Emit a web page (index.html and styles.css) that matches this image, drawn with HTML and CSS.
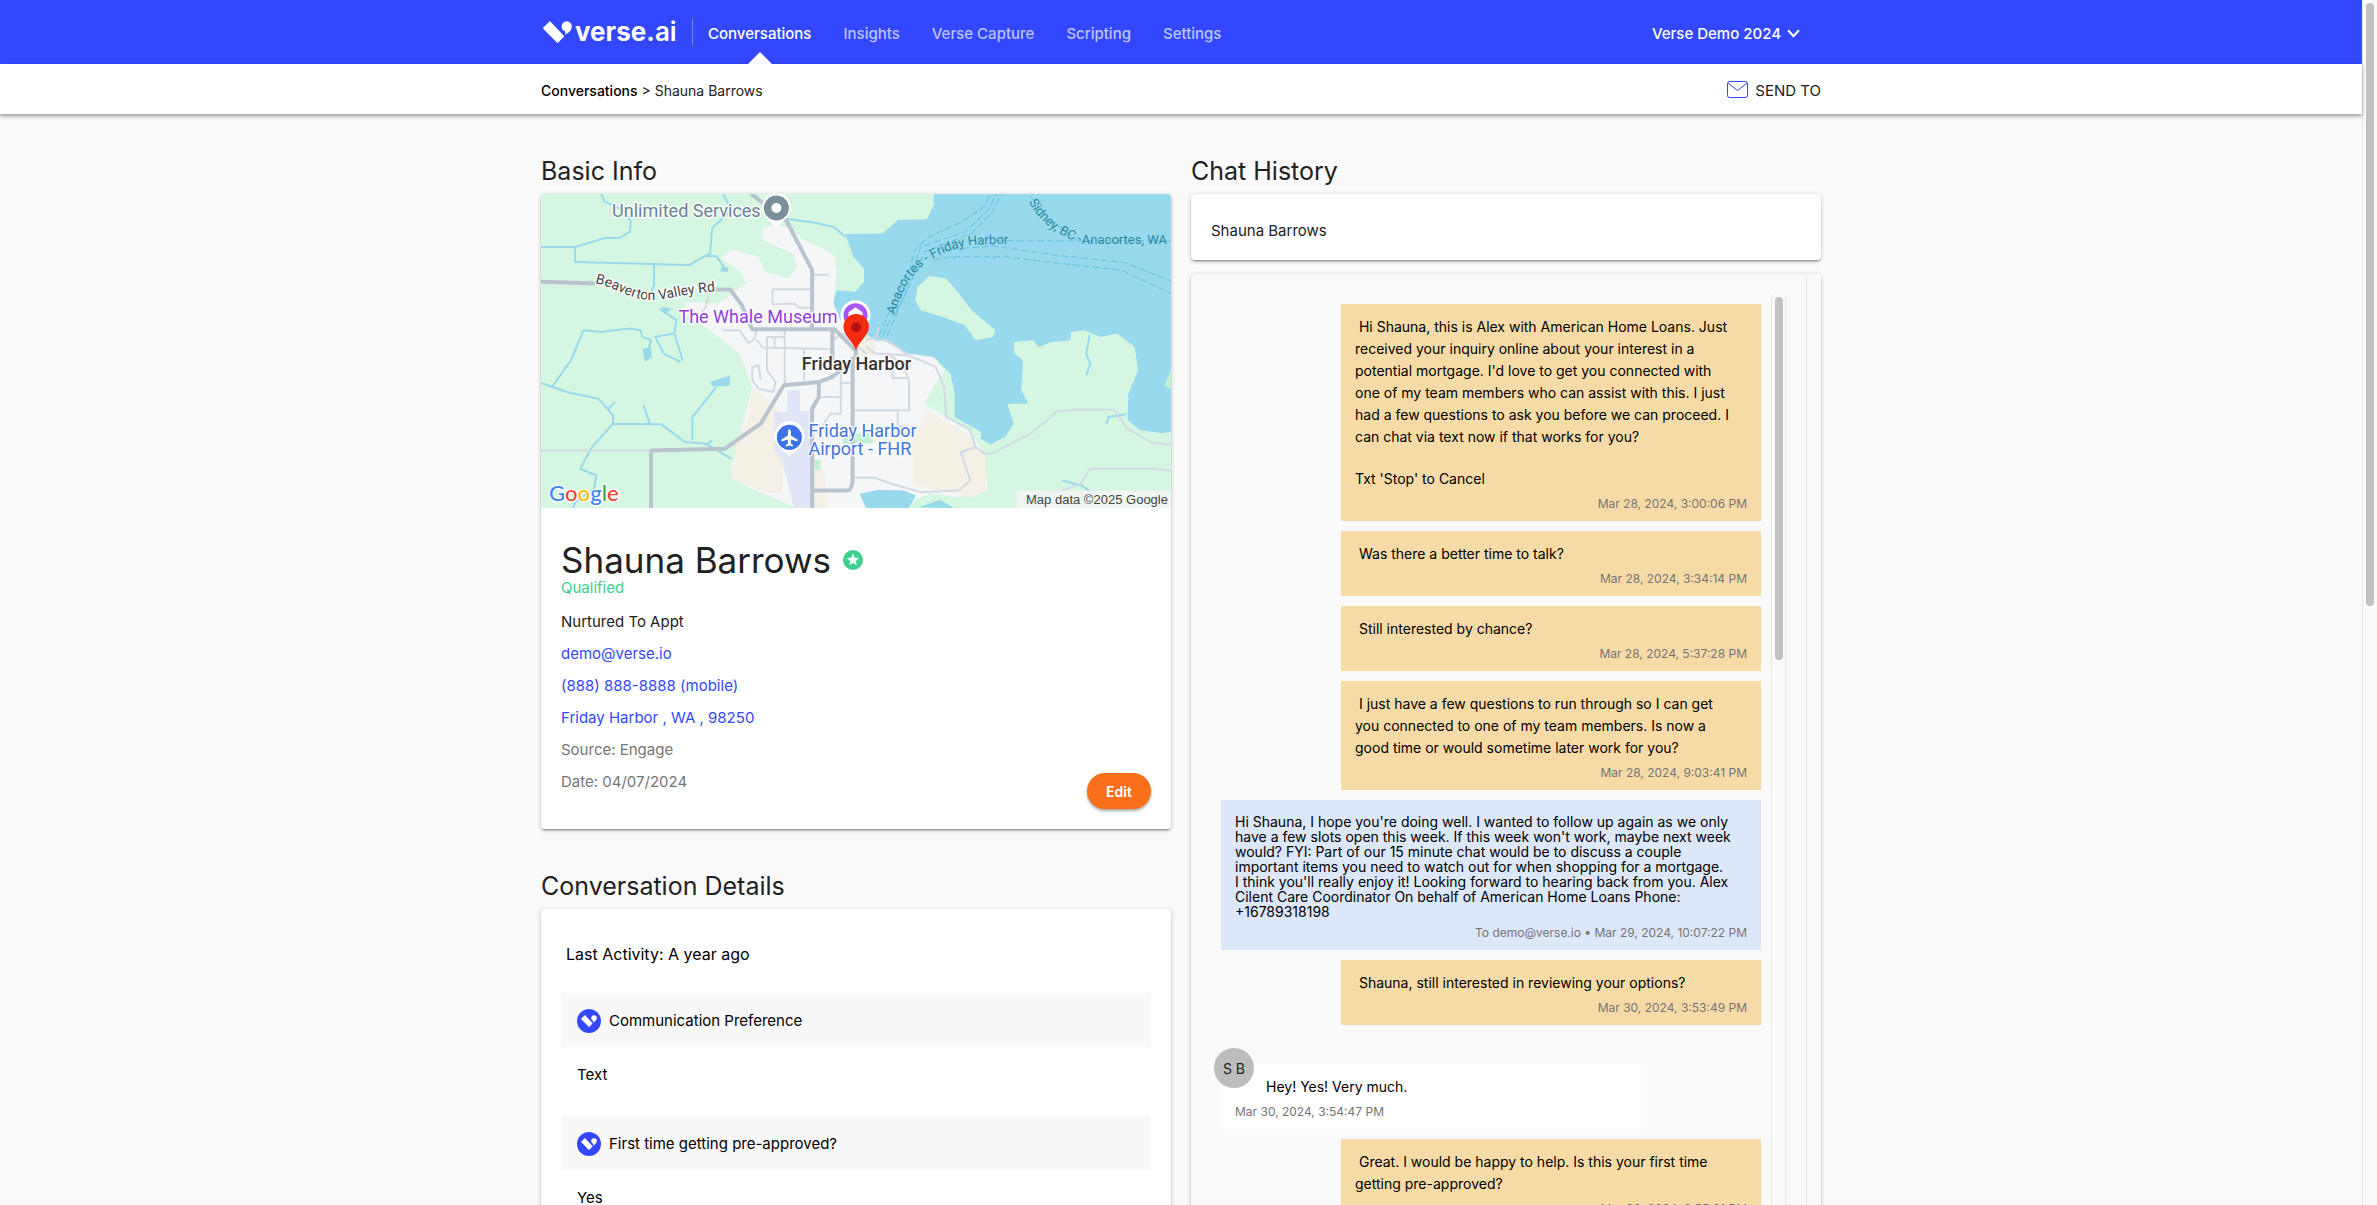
FILE: index.html
```html
<!DOCTYPE html>
<html lang="en">
<head>
<meta charset="utf-8">
<title>Verse.ai - Shauna Barrows</title>
<meta name="viewport" content="width=device-width, initial-scale=1">
<link rel="stylesheet" href="styles.css">
</head>
<body>
<svg class="defs" aria-hidden="true">
  <symbol id="verse-mark" viewBox="0 0 29 22">
    <path d="M.4 6.600 6.200.7a1 1 0 0 1 1.400 0L21.300 15.300 15.300 21.400a1 1 0 0 1-1.400 0L.4 8a1 1 0 0 1 0-1.400z"/>
    <path d="M23.700.3a5.100 5.100 0 0 1 5.100 5.200c0 3.800-3.300 6.500-7 8.300.5-1.500.7-2.500.5-3.400-2.300-.6-3.700-2.600-3.700-4.900A5.100 5.100 0 0 1 23.700.3z"/>
  </symbol>
</svg>
<div class="page">
  <div class="view">
    <header class="topbar">
      <div class="container topbar-row">
        <a class="logo" href="#"><svg class="logo-mark"><use href="#verse-mark"/></svg><span class="logo-word">verse.<span class="logo-tld">ai</span></span></a>
        <nav class="nav">
          <a class="nav-link active" href="#">Conversations</a>
          <a class="nav-link" href="#">Insights</a>
          <a class="nav-link" href="#">Verse Capture</a>
          <a class="nav-link" href="#">Scripting</a>
          <a class="nav-link" href="#">Settings</a>
        </nav>
        <button class="account" type="button">Verse Demo 2024
          <svg class="chevron" viewBox="0 0 12 8"><path d="M1 1l5 5.500L11 1"/></svg>
        </button>
      </div>
    </header>
    <div class="subbar">
      <div class="container subbar-row">
        <div class="crumbs"><a href="#">Conversations</a> &gt; Shauna Barrows</div>
        <button class="send" type="button">
          <svg class="mail" viewBox="0 0 22 18"><rect x=".5" y=".5" width="20" height="16" rx="2"/><path d="M1 2l9.500 7.500L20 2"/></svg>SEND TO
        </button>
      </div>
    </div>

    <main class="container columns">
      <div class="column">
        <section>
          <h2 class="heading">Basic Info</h2>
          <div class="card">
            <svg class="map" viewBox="0 0 629 314" preserveAspectRatio="xMidYMid slice" role="img" aria-label="Map of Friday Harbor">
              <defs>
                <path id="road-label" d="M54 89 C72 92 88 106 112 106 C132 105 140 99 180 97"/>
                <path id="ferry-label" d="M353 121 C362 92 372 74 396 62 S430 50 475 50"/>
                <path id="sidney-label" d="M487 8 C498 28 514 42 550 53"/>
              </defs>
              <g class="land" transform="scale(.421 .33333) translate(-29 -162)">
                <rect class="park" x="20" y="155" width="1510" height="960"/>
                <path class="town" d="M555 262 595 255 625 270 650 300 700 325 724 345 730 400 722 480 800 600 860 600 960 650 985 690 960 740 938 790 1000 840 1050 880 1080 940 1087 1050 1020 1070 950 1060 870 1104H640L520 1040 480 990 500 880 530 740 500 640 440 580 370 520 370 485 450 490 515 430 500 390 455 355 480 330 545 350 560 395 615 415 637 380 625 340 555 300z"/>
                <path class="sand" d="M530 745 580 790 610 830 600 1060 560 1055 482 1015 492 905 520 840zM945 810 990 845 1040 880 1060 920 1082 945 1085 1050 1050 1070 990 1055 910 1035V900zM672 940 700 990 710 1104H640zM775 610 815 590 825 640 780 650z"/>
                <path class="runway" d="M614 750H643V812H665L672 1104H630L600 960 582 930V815H612z"/>
                <path class="green" d="M745 880h70v30h-70zM675 958h17v30h-17z"/>
                <path class="water" d="M960 162H1523V875L1500 878 1450 870 1420 840 1422 760 1445 690 1437 620 1395 580 1355 590 1318 570 1285 575V600L1240 605 1210 620 1195 600 1150 605 1152 640 1172 660 1168 750 1185 790 1135 790 1150 850 1130 890 1095 912 1072 895V875L1010 830V760L1000 700 960 650 900 640 840 600 820 600 800 580 740 540 722 490 730 450 775 455 795 425V385L770 350 750 282 840 280 875 240 945 238 960 195z"/>
                <path class="park" d="M950 408 990 415 1020 460 1050 510 1107 570 1100 590 1060 600 1035 555 980 530 930 510 917 480 922 440z"/>
                <path class="water" d="M785 1060 830 1048 890 1050 918 1065 900 1104H800zM925 1100 975 1078 1010 1104zM430 725 478 705 476 738 435 738zM270 625 290 622 292 650 275 665zM455 382h18v12h-18zM315 500 340 505 322 522z"/>
                <path class="green" d="M1523 690 1507 735 1523 748z"/>
                <g class="stream">
                  <path d="M29 321H110L180 294 215 294 240 275 242 245 225 210 180 185 172 162M110 321V366L380 375 430 340 435 265 468 225 480 205 460 162M415 348H445L465 385M297 375V435L290 455"/>
                  <path d="M29 728 90 755 165 775 200 825V850L315 852 370 905 420 910 480 955M200 850 150 920 122 985 160 1005 155 1045 110 1085 105 1104M185 810 205 785M287 850 272 795M388 900V830L445 740M310 505 350 540 345 580 300 590 320 640 360 665M345 580 365 660M55 740 100 660 130 570 170 575 240 565 265 570 270 590 290 600 282 640M420 915 435 900M600 235 680 248 725 262 750 290M1370 850 1375 830 1415 822M1265 1020 1310 1035 1340 1060M1330 585 1322 640 1332 670 1322 705"/>
                </g>
                <g class="street">
                  <path d="M578 447H670M578 447V492L630 490 640 503H672M672 404H712M460 570H500L520 608 535 598 540 570M540 598 555 622 720 627M607 570V730M565 590H605M565 590V690L585 725 580 755 545 745 530 720V680L545 675 550 720M583 590V622M653 627V720M690 770H740M740 700V820H715L690 870M768 728 740 728M770 810H902V720L885 670 850 640M875 810V860L900 855M863 690V713H900M720 600 745 580 800 640M800 600 825 590 830 560M800 620 822 640 900 645 965 680 985 740 990 830 1045 865 1060 920 1025 935 1047 1020 1020 1050 930 1055 860 1030 820 1012H770M1060 920 1080 940 1100 938 1190 880 1255 812 1300 808H1388L1420 865 1480 908 1523 912M1523 990 1480 985H1330L1310 1030 1265 1050 1210 1060 1180 1080M29 930H290M425 470 420 500 410 515M820 600 850 600 900 645"/>
                </g>
                <g class="road">
                  <path d="M527 162 610 240 672 390V570M29 425 160 430M440 448H478L505 495 530 567H725L776 632 775 650 720 710 690 725 605 735 550 850 465 925 290 930V1104M672 1104V805L688 770V730M768 650V1010Q768 1050 755 1050H672M720 570V660"/>
                </g>
                <g class="ferry">
                  <path d="M830 585 905 380 915 330 950 290 1020 250 1080 200 1095 162M850 585 920 385 940 335 1050 280 1100 215 1120 162M840 585 912 382 930 320 1035 275 1090 210 1108 162M1110 302H1523M980 330 1100 318 1250 345 1415 368 1523 422M960 360 1000 350 1130 350 1260 370 1405 390 1523 460M1190 170 1240 240 1300 300M870 520 905 430"/>
                </g>
              </g>
              <g class="label place"><text x="71" y="23">Unlimited Services</text></g>
              <g class="label road-name"><text><textPath href="#road-label">Beaverton Valley Rd</textPath></text></g>
              <g class="label museum"><text x="296" y="129" text-anchor="end">The Whale Museum</text></g>
              <g class="label airport"><text x="267" y="243">Friday Harbor</text><text x="267" y="261">Airport - FHR</text></g>
              <g class="ferry-name">
                <text><textPath href="#ferry-label">Anacortes - Friday Harbor</textPath></text>
                <text><textPath href="#sidney-label">Sidney, BC -</textPath></text>
                <text x="625" y="50" text-anchor="end">Anacortes, WA</text>
              </g>
              <g>
                <path fill="#fff" d="M235 34 225 24a14.500 14.500 0 1 1 20 0z"/><circle cx="235" cy="14" r="12.500" fill="#78909c"/><circle cx="235" cy="14" r="5" fill="#fff"/>
                <circle cx="314" cy="121" r="15" fill="#fff"/><circle cx="314" cy="121" r="12" fill="#a855f7"/><path fill="#fff" d="M307 118l7-5 7 5v7h-14z"/>
                <path fill="#fff" d="M248 262 237 252a15 15 0 1 1 22 0z"/><circle cx="248" cy="243" r="12.500" fill="#3b72e8"/>
                <path fill="#fff" d="M248 235q1.500 0 1.500 3v3l6.500 4v2l-6.500-2v4l2 1.500v1.500l-3.500-1-3.500 1v-1.500l2-1.500v-4l-6.500 2v-2l6.500-4v-3q0-3 1.500-3z"/>
                <path fill="#f72b10" d="M314.500 157C313 148 302 142 302 132.500a12.700 12.700 0 0 1 25.400 0C327.400 142 316 148 314.500 157z"/><circle cx="314.700" cy="133" r="5" fill="#b31412"/>
              </g>
              <g class="label city"><text x="315" y="176" text-anchor="middle">Friday Harbor</text></g>
              <g class="label google"><text x="8" y="307"><tspan fill="#4285f4">G</tspan><tspan fill="#ea4335">o</tspan><tspan fill="#fbbc05">o</tspan><tspan fill="#4285f4">g</tspan><tspan fill="#34a853">l</tspan><tspan fill="#ea4335">e</tspan></text></g>
              <rect x="475" y="296" width="154" height="18" fill="#f5f5f5" fill-opacity=".8"/>
              <text class="credit" x="626" y="310" text-anchor="end">Map data ©2025 Google</text>
            </svg>
            <div class="info">
              <div class="details">
                <h1 class="name">Shauna Barrows
                  <svg class="star" viewBox="0 0 20 20"><circle cx="10" cy="10" r="10"/><path d="M10 3.500l1.700 4.200 4.500.3-3.500 2.900 1.100 4.400L10 12.900l-3.800 2.400 1.100-4.400L3.800 8l4.500-.3z"/></svg>
                </h1>
                <p class="status">Qualified</p>
                <ul class="facts">
                  <li>Nurtured To Appt</li>
                  <li><a href="#">demo@verse.io</a></li>
                  <li><a href="#">(888) 888-8888 (mobile)</a></li>
                  <li><a href="#">Friday Harbor , WA , 98250</a></li>
                  <li class="muted">Source: Engage</li>
                  <li class="muted">Date: 04/07/2024</li>
                </ul>
              </div>
              <button class="edit" type="button">Edit</button>
            </div>
          </div>
        </section>

        <section>
          <h2 class="heading">Conversation Details</h2>
          <div class="card activity">
            <p class="last">Last Activity: A year ago</p>
            <h3 class="question"><svg class="badge" viewBox="0 0 24 24"><circle cx="12" cy="12" r="12"/><use href="#verse-mark" x="4" y="6" width="16" height="12"/></svg>Communication Preference</h3>
            <p class="answer">Text</p>
            <h3 class="question"><svg class="badge" viewBox="0 0 24 24"><circle cx="12" cy="12" r="12"/><use href="#verse-mark" x="4" y="6" width="16" height="12"/></svg>First time getting pre-approved?</h3>
            <p class="answer">Yes</p>
          </div>
        </section>
      </div>

      <section class="column chat">
        <h2 class="heading">Chat History</h2>
        <div class="card contact">Shauna Barrows</div>
        <div class="card panel">
          <div class="panel-body">
            <div class="messages">
              <article class="msg sms">
                <p>&nbsp;Hi Shauna, this is Alex with American Home Loans. Just<br>received your inquiry online about your interest in a<br>potential mortgage. I'd love to get you connected with<br>one of my team members who can assist with this. I just<br>had a few questions to ask you before we can proceed. I<br>can chat via text now if that works for you?</p>
                <p>Txt 'Stop' to Cancel</p>
                <time>Mar 28, 2024, 3:00:06 PM</time>
              </article>
              <article class="msg sms"><p>&nbsp;Was there a better time to talk?</p><time>Mar 28, 2024, 3:34:14 PM</time></article>
              <article class="msg sms"><p>&nbsp;Still interested by chance?</p><time>Mar 28, 2024, 5:37:28 PM</time></article>
              <article class="msg sms">
                <p>&nbsp;I just have a few questions to run through so I can get<br>you connected to one of my team members. Is now a<br>good time or would sometime later work for you?</p>
                <time>Mar 28, 2024, 9:03:41 PM</time>
              </article>
              <article class="msg email">
                <p>Hi Shauna, I hope you're doing well. I wanted to follow up again as we only<br>have a few slots open this week. If this week won't work, maybe next week<br>would? FYI: Part of our 15 minute chat would be to discuss a couple<br>important items you need to watch out for when shopping for a mortgage.<br>I think you'll really enjoy it! Looking forward to hearing back from you. Alex<br>Cilent Care Coordinator On behalf of American Home Loans Phone:<br>+16789318198</p>
                <time>To demo@verse.io • Mar 29, 2024, 10:07:22 PM</time>
              </article>
              <article class="msg sms"><p>&nbsp;Shauna, still interested in reviewing your options?</p><time>Mar 30, 2024, 3:53:49 PM</time></article>
              <article class="msg reply"><span class="avatar">S B</span><p>Hey! Yes! Very much.</p><time>Mar 30, 2024, 3:54:47 PM</time></article>
              <article class="msg sms">
                <p>&nbsp;Great. I would be happy to help. Is this your first time<br>getting pre-approved?</p>
                <time>Mar 30, 2024, 3:55:01 PM</time>
              </article>
            </div>
            <div class="scroll inner"><div class="thumb"></div></div>
          </div>
          <div class="scroll outer"></div>
        </div>
      </section>
    </main>
  </div>
  <div class="scroll window"><div class="thumb"></div></div>
</div>
</body>
</html>
```
FILE: styles.css
```css
* { box-sizing: border-box; }
body { margin: 0; background: #fafafa; color: #212121; font: 15px/20px Inter, sans-serif; }
h1, h2, h3, p, ul { margin: 0; padding: 0; font-weight: 400; }
ul { list-style: none; }
a { color: inherit; text-decoration: none; }
button { margin: 0; padding: 0; border: 0; background: none; color: inherit; font: inherit; cursor: pointer; }
svg { display: block; flex: none; }
.defs { position: absolute; width: 0; height: 0; }

.page { display: grid; grid-template-columns: minmax(0, 1fr) 15px; height: 100vh; overflow: hidden; }
.view { min-width: 0; }
.container { width: 100%; max-width: 1280px; margin: 0 auto; }

/* top navigation */
.topbar { background: #3347ff; color: #fff; }
.topbar-row { display: flex; align-items: center; height: 64px; padding-right: 21px; }
.logo { display: flex; align-items: center; gap: 3px; width: 152px; height: 26px; padding-left: 2px; margin-right: 15px; border-right: 1px solid #7583ff; }
.logo-mark { width: 29px; height: 22px; fill: #fff; }
.logo-word { font-size: 26px; line-height: 24px; font-weight: 700; }
.logo-tld { font-weight: 600; }
.nav { display: flex; gap: 32px; height: 64px; flex: 1; }
.nav-link { position: relative; padding-top: 24px; color: #bcc3ff; font-weight: 500; }
.nav-link.active { color: #fff; }
.nav-link.active::after { content: ""; position: absolute; left: 50%; bottom: 0; margin-left: -12px; border: 12px solid transparent; border-top-width: 0; border-bottom-color: #fff; }
.account { display: flex; align-items: center; gap: 6px; padding-top: 4px; font-weight: 500; }
.chevron { width: 13px; height: 9px; margin-bottom: 2px; fill: none; stroke: #fff; stroke-width: 2; }

.subbar { position: relative; background: #fff; box-shadow: 0 2px 4px rgba(0, 0, 0, .4); font-size: 14px; }
.subbar-row { display: flex; align-items: center; justify-content: space-between; height: 50px; padding-top: 4px; }
.crumbs a { color: #000; font-weight: 500; }
.send { display: flex; align-items: center; gap: 6px; font-size: 15px; }
.mail { width: 22px; height: 18px; margin-bottom: 2px; fill: none; stroke: #3347ff; }

/* page columns */
.columns { display: grid; grid-template-columns: repeat(2, minmax(0, 1fr)); gap: 20px; padding-top: 42px; }
.column { display: flex; flex-direction: column; gap: 42px; }
.heading { margin-bottom: 8px; font-size: 25px; line-height: 30px; }
.card { overflow: hidden; border-radius: 4px; background: #fff; box-shadow: 0 3px 1px -2px rgba(0, 0, 0, .2), 0 2px 2px rgba(0, 0, 0, .14), 0 1px 5px rgba(0, 0, 0, .2); }

/* map */
.map { width: 100%; font-family: Roboto, sans-serif; }
.park { fill: #d5f7e2; }
.town { fill: #f5f6f7; }
.sand { fill: #f5f0e5; }
.runway { fill: #e0e6f7; }
.green { fill: #c3f0d4; }
.water { fill: #98d9ed; }
.land g path { fill: none; vector-effect: non-scaling-stroke; stroke-linejoin: round; }
.stream path { stroke: #98d9ed; stroke-width: 2px; }
.street path { stroke: #d3dae4; stroke-width: 2px; }
.road path { stroke: #bac4cf; stroke-width: 4px; }
.ferry path { stroke: #68c2de; stroke-width: 1px; stroke-dasharray: 7 3; }
.label text { font-size: 18px; stroke: #fff; stroke-width: 3px; stroke-opacity: .85; paint-order: stroke; stroke-linejoin: round; }
.place { fill: #6d8294; }
.museum { fill: #9140dd; }
.airport { fill: #4475dd; }
.label.city text { font-weight: 500; fill: #333; stroke-opacity: .7; }
.label.road-name text { font-size: 14px; fill: #444; }
.ferry-name { font-size: 13px; fill: #28899f; }
.label.google text { font: 500 22px Lato, sans-serif; }
.credit { font: 13px "Liberation Sans", sans-serif; fill: #444; }

/* contact summary */
.info { display: flex; align-items: flex-end; justify-content: space-between; padding: 34px 20px 20px; }
.details { padding-bottom: 17px; }
.name { display: flex; align-items: center; gap: 12px; font-size: 35px; line-height: 36px; }
.star { width: 20px; height: 20px; fill: #3fcf8e; }
.star path { fill: #fff; }
.status { margin-bottom: 14px; color: #3fcf8e; }
.facts { display: flex; flex-direction: column; gap: 12px; }
.facts a { color: #3347ff; }
.facts .muted { color: #757575; }
.edit { width: 64px; height: 36px; padding-top: 2px; border-radius: 18px; background: #fa6f19; color: #fff; font-size: 14px; font-weight: 600; box-shadow: 0 2px 3px rgba(0, 0, 0, .35); }

/* conversation details */
.activity { padding: 35px 20px 20px; color: #000; }
.last { padding: 0 5px 29px; font-size: 16px; }
.question { display: flex; align-items: center; gap: 8px; height: 54px; padding: 2px 16px 0; background: #f8f8f8; font-size: 15px; }
.badge { width: 24px; height: 24px; fill: #3347ff; }
.badge use { fill: #fff; }
.answer { padding: 18px 16px 31px; }

/* chat */
.column.chat { gap: 0; }
.contact { padding: 27px 20px 19px; margin-bottom: 14px; }
.panel { display: flex; background: #fafafa; }
.panel-body { display: flex; flex: 1; padding: 20px; }
.messages { display: flex; flex: 1; flex-direction: column; align-items: flex-end; gap: 10px; padding: 10px; }
.msg { position: relative; display: flex; flex-direction: column; width: 420px; padding: 12px 14px 9px; color: #000; font-size: 14px; line-height: 22px; font-weight: 500; }
.msg p + p { margin-top: 20px; }
.msg time { margin-top: 6px; color: #757575; font-size: 12px; line-height: 16px; text-align: right; font-weight: 400; }
.sms { background: #f7dba7; }
.email { width: 100%; padding-top: 14px; background: #dce7f9; line-height: 15px; }
.reply { align-self: flex-start; margin-top: 29px; background: #fff; }
.reply p { padding-left: 31px; }
.reply time { text-align: left; }
.avatar { position: absolute; left: -7px; top: -16px; width: 40px; height: 40px; border-radius: 50%; background: #bdbdbd; color: #212121; line-height: 42px; text-align: center; font-weight: 400; }

/* scroll tracks */
.scroll { flex: none; width: 15px; padding: 3px 4px; border-left: 1px solid #e8e8e8; background: #fafafa; }
.thumb { width: 8px; border-radius: 4px; background: #c1c1c1; }
.scroll.inner { padding-left: 3px; border-right: 1px solid #ededed; }
.inner .thumb { height: 363px; }
.window .thumb { height: 50vh; margin-left: -1px; }
```
